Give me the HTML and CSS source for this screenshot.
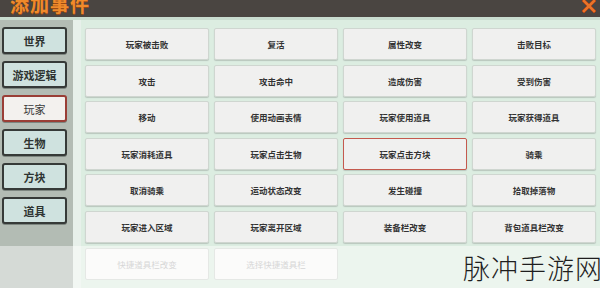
FILE: index.html
```html
<!DOCTYPE html>
<html lang="zh-CN">
<head>
    <meta charset="UTF-8">
    <title>添加事件</title>
    <link rel="stylesheet" href="styles.css">
</head>
<body>
    <div class="window">
        <div class="titlebar">
            <span class="title">添加事件</span>
            <svg class="close" width="16" height="16" viewBox="0 0 16 16">
                <path d="M3 1 L8 6 L13 1 L15 3 L10 8 L15 13 L13 15 L8 10 L3 15 L1 13 L6 8 L1 3 Z" fill="#e8742a" stroke="#b84a18" stroke-width="1"/>
            </svg>
        </div>
        <div class="divider"></div>

        <div class="content">
            <div class="sidebar">
                <div class="tab">世界</div>
                <div class="tab">游戏逻辑</div>
                <div class="tab active">玩家</div>
                <div class="tab">生物</div>
                <div class="tab">方块</div>
                <div class="tab">道具</div>
            </div>
            <div class="strip"></div>
            <div class="main">
                <div class="cell">玩家被击败</div>
                <div class="cell">复活</div>
                <div class="cell">属性改变</div>
                <div class="cell">击败目标</div>

                <div class="cell">攻击</div>
                <div class="cell">攻击命中</div>
                <div class="cell">造成伤害</div>
                <div class="cell">受到伤害</div>

                <div class="cell">移动</div>
                <div class="cell">使用动画表情</div>
                <div class="cell">玩家使用道具</div>
                <div class="cell">玩家获得道具</div>

                <div class="cell">玩家消耗道具</div>
                <div class="cell">玩家点击生物</div>
                <div class="cell selected">玩家点击方块</div>
                <div class="cell">骑乘</div>

                <div class="cell">取消骑乘</div>
                <div class="cell">运动状态改变</div>
                <div class="cell">发生碰撞</div>
                <div class="cell">拾取掉落物</div>

                <div class="cell">玩家进入区域</div>
                <div class="cell">玩家离开区域</div>
                <div class="cell">装备栏改变</div>
                <div class="cell">背包道具栏改变</div>

                <div class="cell disabled">快捷道具栏改变</div>
                <div class="cell disabled">选择快捷道具栏</div>
            </div>
        </div>

        <div class="fade"></div>
        <div class="watermark">脉冲手游网</div>
    </div>
</body>
</html>
```

FILE: styles.css
```css
body {
    margin: 0;
    font-family: "Noto Sans CJK SC", "Noto Sans", sans-serif;
    background: #dcede1;
}
.window {
    position: relative;
    width: 600px;
    height: 288px;
    overflow: hidden;
}
.titlebar {
    height: 17px;
    background: #4a4541;
    display: flex;
    justify-content: space-between;
    align-items: flex-start;
    padding: 0 3px 0 10px;
    overflow: hidden;
}
.title {
    color: #f08a2a;
    font-size: 19px;
    font-weight: bold;
    line-height: 19px;
    margin-top: -6px;
    letter-spacing: 1px;
    text-shadow: 0 1px 0 #9a4a14;
}
.close {
    margin-top: -2px;
}
.divider {
    height: 3px;
    background: #c9dccf;
}
.content {
    display: flex;
    height: 268px;
}
.sidebar {
    width: 65px;
    background: #b3bcb4;
    padding: 7px 6px 0 2px;
    display: flex;
    flex-direction: column;
    gap: 7px;
}
.tab {
    height: 23px;
    border: 2px solid #363a38;
    border-radius: 3px;
    background: #cfe2df;
    box-shadow: 0 1px 0 #7d8680;
    display: flex;
    align-items: center;
    justify-content: center;
    font-size: 11px;
    font-weight: bold;
    color: #2e3432;
}
.tab.active {
    background: #f3f1ee;
    border-color: #9a3e36;
    color: #3a3a3a;
    font-weight: normal;
}
.strip {
    width: 8px;
    background: #e7f0ea;
}
.main {
    flex: 1;
    padding: 8px 4px 0 4px;
    display: grid;
    grid-template-columns: repeat(4, 1fr);
    grid-auto-rows: 32px;
    column-gap: 5px;
    row-gap: 4.6px;
    align-content: start;
}
.cell {
    background: #f0f0ef;
    border: 1px solid #cfd6d0;
    border-radius: 2px;
    box-shadow: 0 1px 1px #b9c6bd;
    display: flex;
    align-items: center;
    justify-content: center;
    font-size: 8.5px;
    color: #333;
    font-weight: bold;
}
.cell.selected {
    border: 1.5px solid #c45a4e;
}
.cell.disabled {
    background: #f7f7f6;
    color: #b4b4b4;
    font-weight: normal;
    box-shadow: none;
}
.fade {
    position: absolute;
    left: 0;
    right: 0;
    top: 246px;
    bottom: 0;
    background: rgba(255, 255, 255, 0.45);
}
.watermark {
    position: absolute;
    right: -3px;
    bottom: 1px;
    font-size: 27px;
    font-weight: 300;
    color: #1e1e1e;
    letter-spacing: 1px;
}
```
